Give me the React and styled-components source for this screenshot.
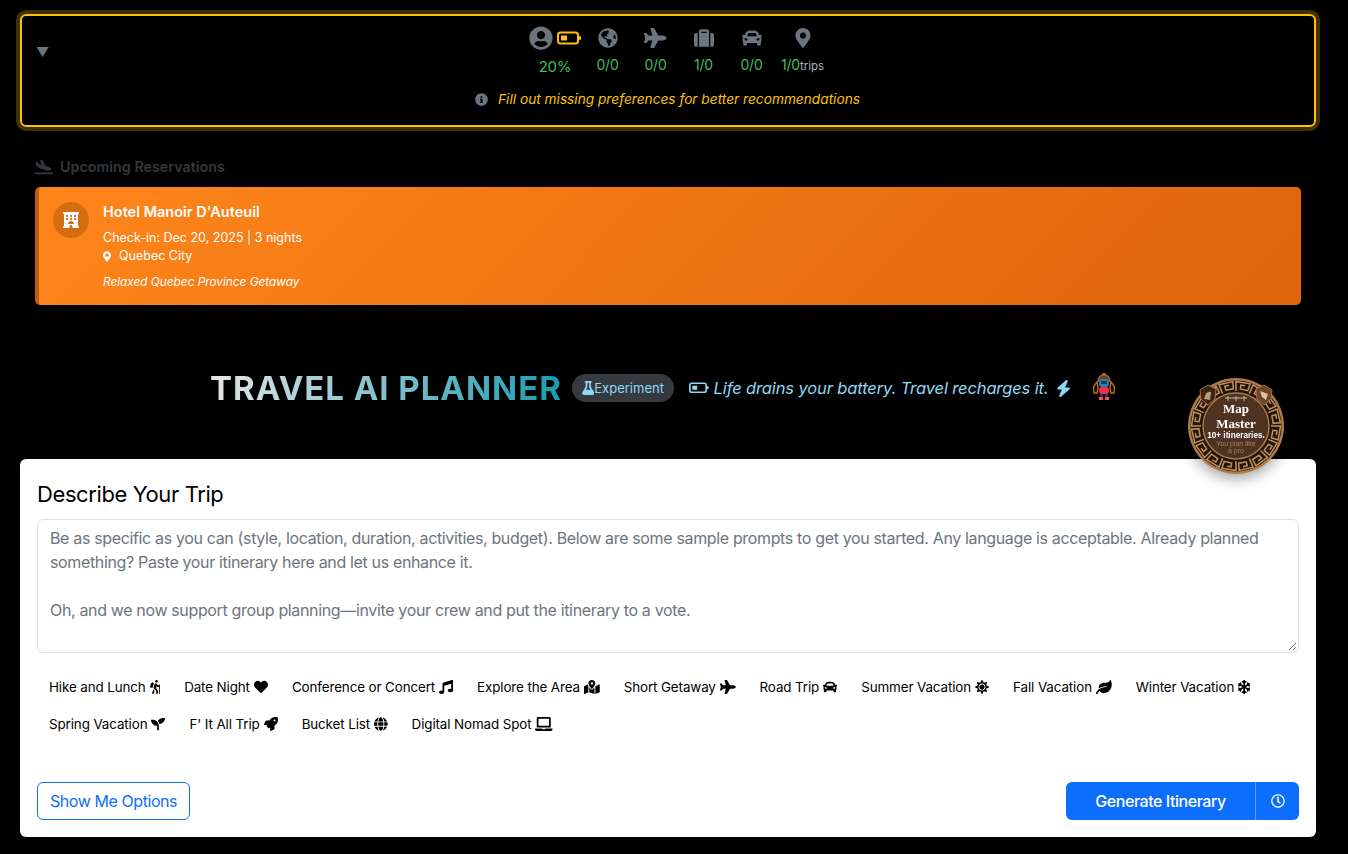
import React from "react";
import styled, { createGlobalStyle } from "styled-components";
import {
  FaUserCircle, FaGlobeAmericas, FaPlane, FaSuitcase, FaCar, FaMapMarkerAlt, FaInfoCircle,
  FaPlaneArrival, FaFlask, FaHiking, FaHeart, FaMusic, FaMapMarkedAlt,
  FaSun, FaLeaf, FaSnowflake, FaSeedling, FaRocket, FaGlobe, FaLaptop, FaRegClock,
} from "react-icons/fa";
import { FaBolt, FaHotel } from "react-icons/fa6";

const GlobalStyle = createGlobalStyle`
  html, body {
    margin: 0;
    background: #000;
    font-family: Inter, "Liberation Sans", sans-serif;
  }
  * { box-sizing: border-box; }
`;

const Page = styled.div`
  padding: 14px 32px 17px 20px;
  height: 854px;
  overflow: hidden;
`;

const StatusBox = styled.div`
  height: 113px;
  border: 2px solid #ffc107;
  border-radius: 6px;
  box-shadow: 0 0 0 4px rgba(255, 193, 7, 0.25);
  display: grid;
  grid-template-columns: 1fr auto 1fr;
  padding: 9px 15px 0 14px;
`;

const Toggle = styled.div`
  color: #6c757d;
  font-size: 13px;
  line-height: 17px;
  margin-top: 19px;
`;

const StatusMiddle = styled.div`
  display: flex;
  flex-direction: column;
  align-items: center;
`;

const Metrics = styled.div`
  display: flex;
  align-items: flex-start;
  margin-left: 21px;
`;

const Metric = styled.div`
  width: ${(p) => p.$w || 48}px;
  display: flex;
  flex-direction: column;
  align-items: center;
  color: #6c757d;
  font-size: 20px;
`;

const MetricIcons = styled.div`
  height: 26px;
  display: flex;
  align-items: center;
  gap: 4px;
`;

// react-icons draws every icon in a 1em square, wide ones need their real width
const WideIcon = styled.span`
  display: inline-flex;
  svg { width: ${(p) => p.$ratio || 1}em; }
`;

const MetricValue = styled.div`
  color: #41bd55;
  font-size: ${(p) => p.$size || 14}px;
  letter-spacing: -0.2px;
  line-height: 16px;
  margin-top: ${(p) => p.$mt || 6}px;
  white-space: nowrap;
`;

const Unit = styled.span`
  color: #adb5bd;
  font-size: 11.5px;
  letter-spacing: 0;
`;

const Hint = styled.div`
  display: flex;
  align-items: center;
  gap: 10px;
  margin-top: 16px;
  color: #ffc107;
  font-size: 13.7px;
  font-style: italic;
  line-height: 16px;
  white-space: nowrap;
  svg { color: #6c757d; font-size: 13px; }
`;

const Section = styled.section`
  margin: 31px 15px 0;
`;

const SectionTitle = styled.div`
  display: flex;
  align-items: center;
  gap: 7px;
  color: #34383c;
  font-size: 14.3px;
  font-weight: 600;
  line-height: 18px;
  svg { font-size: 18px; }
`;

const Reservation = styled.div`
  margin-top: 11px;
  height: 118px;
  border-radius: 5px;
  border-left: 4px solid #c9590a;
  background: linear-gradient(135deg, #ff851b, #e0640a);
  color: #fff;
  display: flex;
  padding: 15px 14px;
  gap: 14px;
`;

const HotelIcon = styled.div`
  width: 36px;
  height: 36px;
  border-radius: 50%;
  background: rgba(120, 60, 0, 0.3);
  display: flex;
  align-items: center;
  justify-content: center;
  font-size: 16px;
`;

const ResName = styled.div`
  font-size: 14.5px;
  font-weight: 600;
  line-height: 20px;
  margin-bottom: 7px;
`;

const ResLine = styled.div`
  display: flex;
  align-items: center;
  gap: 8px;
  font-size: 12.5px;
  line-height: 18px;
  svg { font-size: 11px; width: 8px; }
`;

const ResNote = styled.div`
  font-size: 11.8px;
  font-style: italic;
  line-height: 16px;
  margin-top: 9px;
`;

const Heading = styled.div`
  height: 154px;
  padding: 63px 0 0 190px;
  display: flex;
  align-items: flex-start;
`;

const Title = styled.h1`
  margin: 0;
  font-size: 33px;
  font-weight: 700;
  line-height: 40px;
  letter-spacing: 0.97px;
  background: linear-gradient(90deg, #e6e6e6, #1a9bb0);
  -webkit-background-clip: text;
  background-clip: text;
  color: transparent;
  white-space: nowrap;
`;

const Pill = styled.span`
  margin: 6px 0 0 10px;
  height: 28px;
  padding: 0 10px;
  border-radius: 14px;
  background: #343a40;
  color: #8fd8f5;
  font-size: 13px;
  display: flex;
  align-items: center;
  svg { font-size: 14px; width: 12.5px; }
`;

const Tagline = styled.div`
  margin: 8px 0 0 15px;
  display: flex;
  align-items: center;
  gap: 5px;
  color: #8fd8f5;
  font-size: 16.5px;
  font-style: italic;
  letter-spacing: -0.13px;
  line-height: 24px;
  white-space: nowrap;
  svg:last-child { margin-left: 2px; }
`;

const Robot = styled.svg`
  margin: 5px 0 0 20px;
  flex: none;
`;

const Card = styled.div`
  position: relative;
  height: 378px;
  background: #fff;
  border-radius: 6px;
  padding: 20px 17px 17px 17px;
`;

const BadgeWrap = styled.svg`
  position: absolute;
  top: -87px;
  right: 30px;
  filter: drop-shadow(0 5px 7px rgba(0, 0, 0, 0.35));
`;

const CardTitle = styled.h2`
  margin: 0;
  font-size: 22px;
  font-weight: 400;
  letter-spacing: -0.4px;
  line-height: 30px;
  color: #000;
`;

const PromptBox = styled.div`
  margin-top: 10px;
  height: 134px;
  border: 1px solid #dee2e6;
  border-radius: 6px;
  padding: 6px 12px;
  color: #6c757d;
  font-size: 16px;
  letter-spacing: -0.35px;
  line-height: 24px;
  position: relative;
`;

const Grip = styled.svg`
  position: absolute;
  right: 1px;
  bottom: 1px;
`;

const Samples = styled.div`
  margin-top: 22px;
  display: flex;
  flex-wrap: wrap;
  row-gap: 13px;
`;

const Sample = styled.span`
  display: inline-flex;
  align-items: center;
  gap: 4px;
  height: 24px;
  padding: 0 12px;
  font-size: 13.4px;
  letter-spacing: -0.11px;
  color: #000;
  white-space: nowrap;
  svg { font-size: 14px; width: ${(p) => p.$ratio}em; }
`;

const Actions = styled.div`
  position: absolute;
  left: 17px;
  right: 17px;
  bottom: 17px;
  display: flex;
  justify-content: space-between;
`;

const OutlineButton = styled.button`
  height: 38px;
  padding: 0 12px;
  border: 1px solid #0d6efd;
  border-radius: 6px;
  background: #fff;
  color: #0d6efd;
  font: 400 16px Inter, sans-serif;
  letter-spacing: -0.43px;
`;

const SplitButton = styled.div`
  display: flex;
  height: 38px;
  border-radius: 6px;
  overflow: hidden;
  background: #0d6efd;
  color: #fff;
`;

const MainButton = styled.div`
  width: 189px;
  display: flex;
  align-items: center;
  justify-content: center;
  font-size: 16px;
  font-weight: 500;
  letter-spacing: -0.45px;
`;

const ClockButton = styled.div`
  width: 44px;
  border-left: 1px solid rgba(255, 255, 255, 0.35);
  display: flex;
  align-items: center;
  justify-content: center;
  font-size: 14px;
`;

const Battery = ({ color, size = 1 }) => (
  <svg width={24 * size} height={14 * size} viewBox="0 0 24 14">
    <rect x="1" y="1.5" width="20" height="11" rx="2.5" fill="none" stroke={color} strokeWidth="2" />
    <rect x="4" y="4.5" width="6" height="5" fill={color} />
    <rect x="22" y="5" width="2" height="4" rx="1" fill={color} />
  </svg>
);

const RobotIcon = () => (
  <Robot width="24" height="28" viewBox="0 0 24 28">
    <path d="M6 9 Q6 2 12 2 Q18 2 18 9" fill="#6b3a22" stroke="#a8602c" strokeWidth="1.5" />
    <rect x="10.5" y="0" width="3" height="2" fill="#a9713f" />
    <path d="M5 9 L1.5 14 L2 20 L5 20 L6 15Z" fill="none" stroke="#b5651d" strokeWidth="1.5" />
    <path d="M19 9 L22.5 14 L22 20 L19 20 L18 15Z" fill="none" stroke="#b5651d" strokeWidth="1.5" />
    <rect x="7" y="6" width="10" height="8" rx="3" fill="#2a7fb8" />
    <rect x="9" y="8" width="6" height="3" fill="#123a5c" />
    <rect x="7" y="14" width="10" height="7" rx="3" fill="#e8354f" />
    <rect x="8" y="21" width="3" height="3" fill="#4a2a3a" />
    <rect x="13" y="21" width="3" height="3" fill="#4a2a3a" />
    <rect x="7" y="24" width="4" height="3" fill="#f0506a" />
    <rect x="13" y="24" width="4" height="3" fill="#f0506a" />
  </Robot>
);

// one turn of the greek key, as (angle, radius) fractions of its cell
const KEY = [[0, 0], [0, 1], [0.82, 1], [0.82, 0.24], [0.3, 0.24], [0.3, 0.66], [0.56, 0.66]];

const keyRing = (cx, cy, inner, outer, count) => {
  let d = "";
  for (let i = 0; i < count; i++) {
    KEY.forEach(([u, v], n) => {
      const a = ((i + u) / count) * Math.PI * 2;
      const r = inner + (outer - inner) * v;
      d += `${n ? "L" : "M"}${(cx + r * Math.cos(a)).toFixed(2)} ${(cy + r * Math.sin(a)).toFixed(2)}`;
    });
  }
  return d;
};

const Badge = () => (
  <BadgeWrap width="100" height="112" viewBox="0 0 100 112">
    <circle cx="50" cy="54" r="48" fill="#b07a48" />
    <circle cx="50" cy="54" r="45.5" fill="#24150c" />
    <path d={keyRing(50, 54, 35, 44.5, 16)} fill="none" stroke="#c0915f" strokeWidth="1.5" />
    <circle cx="50" cy="54" r="33" fill="#4f3322" stroke="#b07a48" strokeWidth="1.4" />
    <path d="M14 18 L22 13 L30 17 L29 27 L22 33 L15 27Z" fill="#3a2415" stroke="#a9713f" />
    <path d="M18 27 Q20 18 25 20 L24 28Z" fill="#b89a78" />
    <path d="M70 17 L78 13 L86 18 L85 27 L78 33 L71 27Z" fill="#6a4729" stroke="#a9713f" />
    <path d="M74 19 L82 22 L80 28 L76 25Z" fill="#e0c4a0" />
    <path d="M39 26 H61 M42 24 V29 M50 24 V29 M58 24 V29" stroke="#d8c6ae" strokeWidth="0.9" fill="none" />
    <text x="50" y="41" textAnchor="middle" fontFamily="Liberation Serif" fontWeight="700" fontSize="13" fill="#fff">Map</text>
    <text x="50" y="56" textAnchor="middle" fontFamily="Liberation Serif" fontWeight="700" fontSize="13" fill="#fff">Master</text>
    <text x="50" y="66" textAnchor="middle" fontFamily="Liberation Sans" fontWeight="700" fontSize="8.2" fill="#fff">10+ itineraries.</text>
    <text x="50" y="74" textAnchor="middle" fontFamily="Liberation Sans" fontSize="7" fill="#a98458">You plan like</text>
    <text x="50" y="80.5" textAnchor="middle" fontFamily="Liberation Sans" fontSize="7" fill="#a98458">a pro</text>
  </BadgeWrap>
);

const metrics = [
  { icon: <FaGlobeAmericas />, value: "0/0" },
  { icon: <FaPlane />, ratio: 1.125, value: "0/0" },
  { icon: <FaSuitcase />, value: "1/0" },
  { icon: <FaCar />, value: "0/0" },
];

const samples = [
  ["Hike and Lunch", <FaHiking />, 0.75],
  ["Date Night", <FaHeart />, 1],
  ["Conference or Concert", <FaMusic />, 1],
  ["Explore the Area", <FaMapMarkedAlt />, 1.125],
  ["Short Getaway", <FaPlane />, 1.125],
  ["Road Trip", <FaCar />, 1],
  ["Summer Vacation", <FaSun />, 1],
  ["Fall Vacation", <FaLeaf />, 1.125],
  ["Winter Vacation", <FaSnowflake />, 0.875],
  ["Spring Vacation", <FaSeedling />, 1],
  ["F' It All Trip", <FaRocket />, 1],
  ["Bucket List", <FaGlobe />, 0.97],
  ["Digital Nomad Spot", <FaLaptop />, 1.25],
];

const App = () => {
  return (
    <Page>
      <GlobalStyle />
      <StatusBox>
        <Toggle>▼</Toggle>
        <StatusMiddle>
          <Metrics>
            <Metric $w={57}>
              <MetricIcons>
                <FaUserCircle size={24} />
                <Battery color="#ffc107" />
              </MetricIcons>
              <MetricValue $mt={8} $size={15}>20%</MetricValue>
            </Metric>
            {metrics.map((m, i) => (
              <Metric key={i}>
                <MetricIcons><WideIcon $ratio={m.ratio}>{m.icon}</WideIcon></MetricIcons>
                <MetricValue>{m.value}</MetricValue>
              </Metric>
            ))}
            <Metric $w={54}>
              <MetricIcons><FaMapMarkerAlt /></MetricIcons>
              <MetricValue>1/0<Unit>trips</Unit></MetricValue>
            </Metric>
          </Metrics>
          <Hint>
            <FaInfoCircle />
            Fill out missing preferences for better recommendations
          </Hint>
        </StatusMiddle>
        <div />
      </StatusBox>

      <Section>
        <SectionTitle><FaPlaneArrival /> Upcoming Reservations</SectionTitle>
        <Reservation>
          <HotelIcon><FaHotel /></HotelIcon>
          <div>
            <ResName>Hotel Manoir D'Auteuil</ResName>
            <ResLine>Check-in: Dec 20, 2025 | 3 nights</ResLine>
            <ResLine><FaMapMarkerAlt /> Quebec City</ResLine>
            <ResNote>Relaxed Quebec Province Getaway</ResNote>
          </div>
        </Reservation>
      </Section>

      <Heading>
        <Title>TRAVEL AI PLANNER</Title>
        <Pill><FaFlask />Experiment</Pill>
        <Tagline>
          <Battery color="#8fd8f5" size={0.82} />
          Life drains your battery. Travel recharges it.
          <FaBolt size={17} />
        </Tagline>
        <RobotIcon />
      </Heading>

      <Card>
        <Badge />
        <CardTitle>Describe Your Trip</CardTitle>
        <PromptBox>
          Be as specific as you can (style, location, duration, activities, budget). Below are some sample prompts to get you started. Any language is acceptable. Already planned something? Paste your itinerary here and let us enhance it.
          <br /><br />
          Oh, and we now support group planning—invite your crew and put the itinerary to a vote.
          <Grip width="9" height="9" viewBox="0 0 9 9">
            <path d="M1 8 L8 1 M5 8 L8 5" stroke="#777" strokeWidth="1" />
          </Grip>
        </PromptBox>
        <Samples>
          {samples.map(([label, icon, ratio]) => (
            <Sample key={label} $ratio={ratio}>{label} {icon}</Sample>
          ))}
        </Samples>
        <Actions>
          <OutlineButton>Show Me Options</OutlineButton>
          <SplitButton>
            <MainButton>Generate Itinerary</MainButton>
            <ClockButton><FaRegClock /></ClockButton>
          </SplitButton>
        </Actions>
      </Card>
    </Page>
  );
};

export default App;
